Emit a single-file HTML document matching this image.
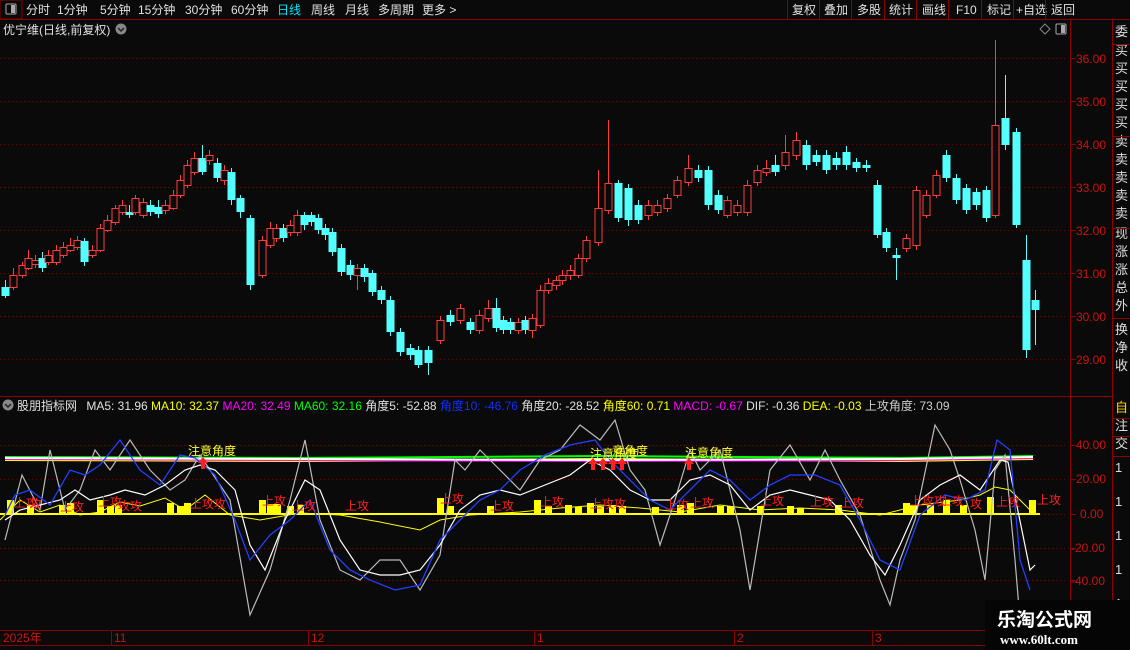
<!DOCTYPE html>
<html><head><meta charset="utf-8"><style>
body{margin:0;background:#0a0a0a;width:1130px;height:650px;overflow:hidden;font-family:"Liberation Sans","Noto Sans CJK SC",sans-serif;}
#c{position:absolute;left:0;top:0}
.t{font-size:12px}
</style></head><body>
<svg id="c" width="1130" height="650" xmlns="http://www.w3.org/2000/svg" font-family="Liberation Sans, Noto Sans CJK SC, sans-serif">
<rect width="1130" height="650" fill="#0a0a0a"/>
<!-- top bar -->
<rect x="0" y="0" width="22" height="19" fill="none" stroke="#8b0000"/>
<rect x="6" y="4" width="10" height="10" rx="1" fill="none" stroke="#aaa"/><rect x="11" y="5" width="4" height="8" fill="#aaa"/>
<line x1="0" y1="19.5" x2="1130" y2="19.5" stroke="#8b0000"/>
<g font-size="12" fill="#e0e0e0">
<text x="26" y="14">分时</text><text x="57" y="14">1分钟</text><text x="100" y="14">5分钟</text><text x="138" y="14">15分钟</text><text x="185" y="14">30分钟</text><text x="231" y="14">60分钟</text>
<text x="277" y="14" fill="#00e5ff">日线</text><text x="311" y="14">周线</text><text x="345" y="14">月线</text><text x="378" y="14">多周期</text><text x="422" y="14">更多 &gt;</text>
<text x="792" y="14">复权</text><text x="824" y="14">叠加</text><text x="857" y="14">多股</text><text x="889" y="14">统计</text><text x="922" y="14">画线</text><text x="956" y="14">F10</text><text x="987" y="14">标记</text><text x="1016" y="14">+自选</text><text x="1051" y="14">返回</text>
</g>
<g stroke="#8b0000"><line x1="787.5" y1="0" x2="787.5" y2="19"/><line x1="819.5" y1="0" x2="819.5" y2="19"/><line x1="851.5" y1="0" x2="851.5" y2="19"/><line x1="884.5" y1="0" x2="884.5" y2="19"/><line x1="916.5" y1="0" x2="916.5" y2="19"/><line x1="948.5" y1="0" x2="948.5" y2="19"/><line x1="981.5" y1="0" x2="981.5" y2="19"/><line x1="1013.5" y1="0" x2="1013.5" y2="19"/><line x1="1045.5" y1="0" x2="1045.5" y2="19"/></g>
<text x="3" y="34" font-size="12" fill="#e0e0e0">优宁维(日线,前复权)</text>
<circle cx="121" cy="29" r="5.5" fill="#888"/><path d="M118 28l3 3 3-3" stroke="#222" fill="none" stroke-width="1.5"/>
<path d="M1045 24l5 5-5 5-5-5z" fill="none" stroke="#888"/>
<rect x="1056" y="24" width="10" height="10" rx="1" fill="none" stroke="#aaa"/><rect x="1061" y="25" width="4" height="8" fill="#aaa"/>
<!-- axes -->
<line x1="1070.5" y1="20" x2="1070.5" y2="630" stroke="#8b0000"/>
<line x1="1112.5" y1="20" x2="1112.5" y2="630" stroke="#8b0000"/>
<line x1="0" y1="396.5" x2="1112" y2="396.5" stroke="#8b0000"/>
<line x1="0" y1="630.5" x2="1130" y2="630.5" stroke="#8b0000"/>
<line x1="0" y1="645.5" x2="1130" y2="645.5" stroke="#8b0000"/>
<g id="grid"></g>
<g font-size="12" fill="#d01010">
<text x="1076" y="63">36.00</text><text x="1076" y="106">35.00</text><text x="1076" y="149">34.00</text><text x="1076" y="192">33.00</text><text x="1076" y="235">32.00</text><text x="1076" y="278">31.00</text><text x="1076" y="321">30.00</text><text x="1076" y="364">29.00</text>
<text x="1076" y="449">40.00</text><text x="1076" y="483">20.00</text><text x="1080" y="518">0.00</text><text x="1071" y="552">-20.00</text><text x="1071" y="585">-40.00</text>
</g>
<!-- sidebar -->
<g font-size="13" fill="#ddd">
<text x="1115" y="36">委</text><text x="1115" y="55">买</text><text x="1115" y="73">买</text><text x="1115" y="91">买</text><text x="1115" y="109">买</text><text x="1115" y="127">买</text><text x="1115" y="146">卖</text><text x="1115" y="164">卖</text><text x="1115" y="182">卖</text><text x="1115" y="200">卖</text><text x="1115" y="218">卖</text><text x="1115" y="238">现</text><text x="1115" y="256">涨</text><text x="1115" y="274">涨</text><text x="1115" y="292">总</text><text x="1115" y="310">外</text><text x="1115" y="334">换</text><text x="1115" y="352">净</text><text x="1115" y="370">收</text>
<text x="1115" y="412" fill="#ffd700">自</text><text x="1115" y="430">注</text><text x="1115" y="448">交</text><text x="1115" y="472">1</text><text x="1115" y="506">1</text><text x="1115" y="540">1</text><text x="1115" y="574">1</text><text x="1115" y="608">1</text>
</g>
<g stroke="#8b0000"><line x1="1112" y1="44.5" x2="1130" y2="44.5"/><line x1="1112" y1="136.5" x2="1130" y2="136.5"/><line x1="1112" y1="228.5" x2="1130" y2="228.5"/><line x1="1112" y1="318.5" x2="1130" y2="318.5"/><line x1="1112" y1="418.5" x2="1130" y2="418.5"/><line x1="1112" y1="436.5" x2="1130" y2="436.5"/><line x1="1112" y1="456.5" x2="1130" y2="456.5"/></g>
<g id="candles"></g>
<!-- indicator header -->
<circle cx="8" cy="405" r="5.5" fill="#888"/><path d="M5 404l3 3 3-3" stroke="#222" fill="none" stroke-width="1.5"/>
<text y="410" font-size="12" fill="#e0e0e0"><tspan x="17">股朋指标网</tspan><tspan x="83"> MA5: 31.96</tspan><tspan fill="#ffff00"> MA10: 32.37</tspan><tspan fill="#ff00ff"> MA20: 32.49</tspan><tspan fill="#00ff00"> MA60: 32.16</tspan><tspan> 角度5: -52.88</tspan><tspan fill="#1030ff"> 角度10: -46.76</tspan><tspan> 角度20: -28.52</tspan><tspan fill="#ffff00"> 角度60: 0.71</tspan><tspan fill="#ff00ff"> MACD: -0.67</tspan><tspan> DIF: -0.36</tspan><tspan fill="#ffff00"> DEA: -0.03</tspan><tspan fill="#ccc"> 上攻角度: 73.09</tspan></text>
<g id="ind"></g>
<g font-size="12" fill="#ff2020">
<text x="14" y="507">上攻</text><text x="30" y="508">攻</text><text x="60" y="511">上攻</text><text x="98" y="506">上攻</text><text x="118" y="510">攻攻</text><text x="190" y="508">上攻攻</text><text x="262" y="505">上攻</text><text x="292" y="510">上攻</text><text x="345" y="510">上攻</text><text x="440" y="503">上攻</text><text x="490" y="510">上攻</text><text x="540" y="506">上攻</text><text x="590" y="508">上攻攻</text><text x="665" y="509">上攻</text><text x="690" y="507">上攻</text><text x="760" y="505">上攻</text><text x="810" y="506">上攻</text><text x="840" y="507">上攻</text><text x="910" y="505">上攻攻</text><text x="940" y="505">上攻</text><text x="970" y="508">攻</text><text x="996" y="506">上攻</text><text x="1037" y="504">上攻</text>
</g>
<g font-size="12" fill="#ffff30">
<text x="188" y="455">注意角度</text><text x="590" y="458">注意角度</text><text x="612" y="455">意角度</text><text x="685" y="457">注意角度</text>
</g>
<g fill="#ff2020">
<path d="M203 457l-5 6h3v6h4v-6h3z"/><path d="M593 458l-5 6h3v6h4v-6h3z"/><path d="M603 458l-5 6h3v6h4v-6h3z"/><path d="M613 458l-5 6h3v6h4v-6h3z"/><path d="M622 458l-5 6h3v6h4v-6h3z"/><path d="M689 458l-5 6h3v6h4v-6h3z"/>
</g>
<!-- date axis -->
<g font-size="12" fill="#d01010"><text x="3" y="642">2025年</text><text x="114" y="642">11</text><text x="311" y="642">12</text><text x="537" y="642">1</text><text x="737" y="642">2</text><text x="875" y="642">3</text></g>
<g stroke="#8b0000"><line x1="111.5" y1="630" x2="111.5" y2="645"/><line x1="308.5" y1="630" x2="308.5" y2="645"/><line x1="534.5" y1="630" x2="534.5" y2="645"/><line x1="734.5" y1="630" x2="734.5" y2="645"/><line x1="872.5" y1="630" x2="872.5" y2="645"/></g>
<!-- watermark -->
<rect x="985" y="600" width="145" height="50" fill="#050505"/>
<text x="997" y="626" font-size="19" font-weight="bold" fill="#fff">乐淘公式网</text>
<text x="1000" y="644" font-size="13" font-weight="bold" fill="#fff" font-family="Liberation Serif, serif">www.60lt.com</text>
</svg>
<script>
var NS="http://www.w3.org/2000/svg";
function el(p,t,a){var e=document.createElementNS(NS,t);for(var k in a)e.setAttribute(k,a[k]);document.getElementById(p).appendChild(e);return e;}
[58,101,144,187,230,273,316,359,445,479,514,548,580].forEach(function(y){el("grid","line",{x1:0,x2:1068,y1:y+.5,y2:y+.5,stroke:"#6a0000","stroke-dasharray":"1,3"});el("grid","line",{x1:1070,x2:1076,y1:y+.5,y2:y+.5,stroke:"#8b0000"});});
var C=[[5,287,296,0,280,298],[13,275,287,1,268,290],[22,265,275,1,262,278],[28,258,268,1,250,270],[35,260,264,1,255,268],[42,258,268,0,252,272],[48,255,262,1,250,265],[56,250,262,1,245,265],[63,247,255,1,242,258],[70,245,250,1,238,252],[77,240,247,1,236,250],[84,241,262,0,238,266],[92,250,255,1,245,258],[100,228,250,1,224,252],[107,220,230,1,215,232],[115,208,222,1,205,225],[122,205,212,1,200,215],[129,212,215,0,205,218],[135,198,212,1,195,215],[143,202,215,1,198,218],[150,205,212,0,200,216],[158,207,214,0,200,218],[165,205,210,1,200,214],[173,195,208,1,190,210],[180,180,195,1,175,198],[187,165,185,1,160,188],[194,158,172,1,152,175],[202,158,172,0,145,175],[209,155,160,1,150,165],[217,163,178,0,158,182],[224,170,180,1,165,185],[231,172,200,0,168,205],[240,198,212,0,195,218],[250,218,285,0,215,290],[262,240,275,1,236,278],[270,228,245,1,222,248],[276,228,238,1,224,242],[283,228,238,0,224,242],[290,225,232,1,220,236],[297,215,232,1,210,236],[304,215,225,0,212,230],[311,215,222,0,212,226],[318,218,230,0,214,234],[325,228,235,0,224,240],[332,232,252,0,228,256],[341,248,272,0,244,276],[350,265,275,0,260,280],[357,268,275,1,264,290],[364,268,277,0,264,282],[372,273,292,0,270,296],[381,290,300,0,286,304],[390,300,332,0,296,336],[400,332,352,0,328,356],[410,348,355,0,344,360],[418,350,365,0,346,368],[428,350,363,0,346,375],[440,320,340,1,316,344],[450,315,322,0,310,326],[460,308,320,1,304,324],[470,322,330,0,318,334],[479,315,330,1,310,334],[488,308,318,1,300,322],[496,308,328,0,298,332],[503,320,330,0,316,334],[510,322,330,0,318,334],[518,322,330,1,318,334],[525,320,330,0,316,334],[532,318,330,1,314,338],[540,290,325,1,285,328],[548,283,290,1,278,294],[556,280,285,1,276,290],[562,275,280,1,270,285],[570,270,275,1,265,280],[578,258,275,1,254,278],[586,240,258,1,236,262],[598,208,242,1,170,246],[608,183,210,1,120,214],[618,183,218,0,180,222],[628,188,220,0,184,226],[638,205,220,0,200,224],[648,205,215,1,200,220],[657,205,212,1,200,216],[667,198,208,1,194,212],[677,180,195,1,176,198],[688,168,182,1,155,186],[698,170,178,0,165,182],[708,170,205,0,166,210],[718,195,210,0,190,214],[727,200,215,1,196,218],[737,205,212,1,200,216],[747,185,212,1,180,216],[757,170,182,1,165,186],[766,168,172,1,160,176],[775,165,172,0,155,176],[785,152,165,1,135,170],[796,140,155,1,132,160],[806,145,165,0,140,170],[816,155,162,0,150,166],[826,155,170,0,150,174],[836,158,165,0,152,170],[846,152,165,0,146,170],[856,162,168,0,158,172],[866,165,168,0,160,172],[877,185,235,0,180,238],[886,232,248,0,228,252],[896,255,258,0,248,280],[906,238,248,1,234,252],[916,190,245,1,186,250],[926,195,215,1,190,218],[936,175,195,1,170,198],[946,155,178,0,150,182],[956,178,200,0,174,204],[966,188,210,0,184,214],[976,192,205,0,188,210],[986,190,218,0,186,222],[995,125,215,1,40,218],[1005,118,145,0,75,150],[1016,132,225,0,128,228],[1026,260,350,0,235,358],[1035,300,310,0,290,345]];
C.forEach(function(c){var x=c[0],col=c[3]?"#ff3c3c":"#54ffff";el("candles","line",{x1:x+.5,x2:x+.5,y1:c[4],y2:c[5],stroke:col});if(c[3])el("candles","rect",{x:x-3,y:c[1]+.5,width:7,height:Math.max(1,c[2]-c[1]),fill:"#0a0a0a",stroke:col});else el("candles","rect",{x:x-3.5,y:c[1],width:8,height:Math.max(1,c[2]-c[1]),fill:col});});
// MA lines
[["#ffff00",460],["#ff00ff",459],["#00ff00",457],["#ffffff",458]].forEach(function(a,i){el("ind","polyline",{points:"5,"+a[1]+" 300,"+(a[1]+1)+" 600,"+(a[1]+(i%2?2:-1))+" 900,"+(a[1]+1)+" 1033,"+(a[1]-1),fill:"none",stroke:a[0],"stroke-width":2});});
// bars
[[10,500],[30,505],[62,505],[70,503],[100,500],[110,506],[118,505],[170,503],[180,506],[187,503],[262,500],[270,504],[277,504],[290,506],[300,505],[440,498],[450,506],[490,506],[537,500],[548,506],[568,505],[578,507],[590,503],[600,506],[612,505],[622,506],[655,507],[680,505],[690,503],[720,506],[730,506],[760,506],[790,506],[800,508],[838,505],[906,503],[913,505],[930,505],[946,500],[963,505],[990,497],[1032,500]].forEach(function(b){el("ind","rect",{x:b[0]-3,y:b[1],width:7,height:514-b[1],fill:"#ffff00"});});
el("ind","line",{x1:0,x2:1040,y1:514,y2:514,stroke:"#ffff00","stroke-width":2});
function pl(pts,col,w){el("ind","polyline",{points:pts.join(" "),fill:"none",stroke:col,"stroke-width":w||1});}
pl(["0,520","20,500","40,512","60,505","80,515","100,512","120,502","140,506","165,498","185,510","205,495","230,515","260,520","300,513","340,515","380,522","420,530","440,520","470,515","520,512","560,508","600,505","640,508","680,512","720,505","760,510","800,508","840,510","880,515","920,505","960,500","980,495","995,487","1010,490","1025,505","1035,515"],"#ffff00",1);
pl(["5,540","22,475","40,510","50,450","65,510","80,490","95,450","110,470","130,440","150,470","170,490","185,480","200,455","210,470","230,500","250,615","270,570","290,500","305,440","320,520","340,570","360,580","380,560","400,560","420,590","440,555","455,460","465,470","480,450","500,470","520,490","540,460","560,450","580,425","600,440","615,420","630,470","645,490","660,545","675,500","690,450","700,470","720,450","740,530","750,590","770,470","790,445","810,480","825,450","840,480","860,515","880,580","890,605","900,560","915,520","935,425","950,450","960,480","975,530","985,580","995,470","1005,455","1015,560","1020,620"],"#bbbbbb",1.2);
pl(["5,520","20,510","40,505","60,500","75,490","90,500","110,495","125,490","145,495","165,485","185,470","200,465","215,470","235,490","250,545","265,570","285,520","305,480","320,490","340,540","360,570","380,575","400,575","420,570","440,545","460,510","480,495","500,490","520,495","545,485","570,475","590,460","610,470","630,490","650,500","670,500","690,480","710,475","730,485","750,510","770,495","790,490","810,495","830,500","850,520","870,555","885,575","900,545","920,500","940,485","960,475","980,490","1000,460","1008,462","1030,570","1035,565"],"#ffffff",1.2);
pl(["5,515","15,495","30,490","50,505","70,470","85,475","100,465","120,440","140,470","160,485","180,455","195,458","215,475","235,520","250,560","270,535","290,520","310,500","330,550","350,570","370,580","395,590","420,585","440,540","460,520","480,500","500,490","520,470","545,455","570,445","595,440","610,460","630,480","650,500","670,510","690,490","710,470","730,480","750,500","770,485","790,475","815,475","840,485","860,520","880,560","900,570","920,515","945,495","965,500","985,490","997,440","1010,450","1020,560","1030,590"],"#2040ff",1.3);
</script>
</body></html>
